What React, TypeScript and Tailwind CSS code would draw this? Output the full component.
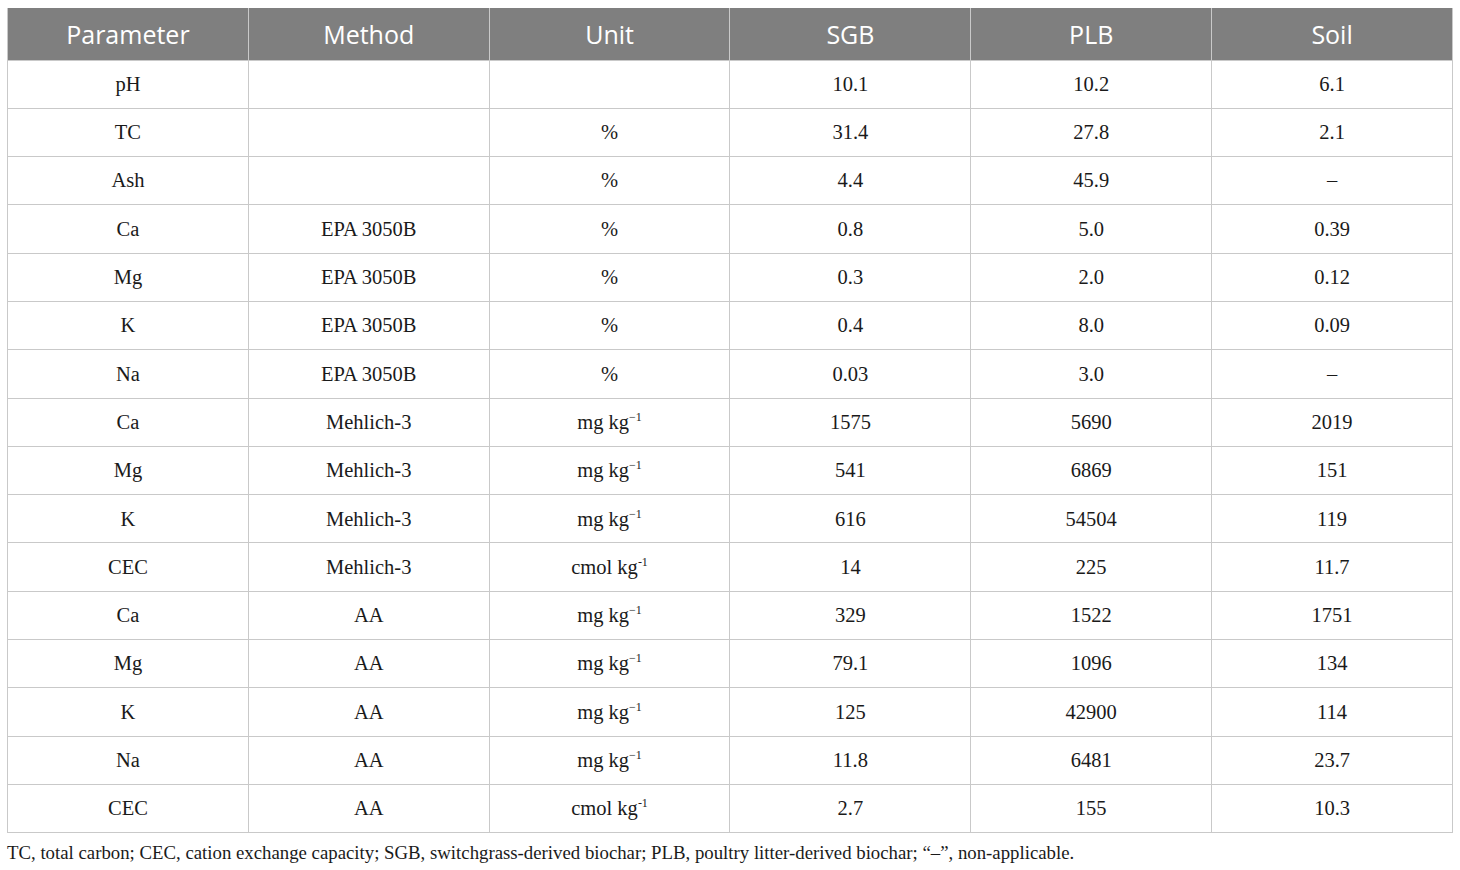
import React from "react";

const mg = (
  <>
    mg kg<sup className="text-[12px] relative top-[-8px] align-baseline">−1</sup>
  </>
);
const cmol = (
  <>
    cmol kg<sup className="text-[12px] relative top-[-8px] align-baseline">-1</sup>
  </>
);

const data: [string, string, React.ReactNode, string, string, string][] = [
  ["pH", "", "", "10.1", "10.2", "6.1"],
  ["TC", "", "%", "31.4", "27.8", "2.1"],
  ["Ash", "", "%", "4.4", "45.9", "–"],
  ["Ca", "EPA 3050B", "%", "0.8", "5.0", "0.39"],
  ["Mg", "EPA 3050B", "%", "0.3", "2.0", "0.12"],
  ["K", "EPA 3050B", "%", "0.4", "8.0", "0.09"],
  ["Na", "EPA 3050B", "%", "0.03", "3.0", "–"],
  ["Ca", "Mehlich-3", mg, "1575", "5690", "2019"],
  ["Mg", "Mehlich-3", mg, "541", "6869", "151"],
  ["K", "Mehlich-3", mg, "616", "54504", "119"],
  ["CEC", "Mehlich-3", cmol, "14", "225", "11.7"],
  ["Ca", "AA", mg, "329", "1522", "1751"],
  ["Mg", "AA", mg, "79.1", "1096", "134"],
  ["K", "AA", mg, "125", "42900", "114"],
  ["Na", "AA", mg, "11.8", "6481", "23.7"],
  ["CEC", "AA", cmol, "2.7", "155", "10.3"],
];

const headers = ["Parameter", "Method", "Unit", "SGB", "PLB", "Soil"];

export default function App() {
  return (
    <div className="w-[1460px] h-[870px] bg-white pt-[8px] px-[7px]">
      <table className="w-[1446px] border-collapse table-fixed">
        <thead>
          <tr className="h-[52px] bg-[#7f7f7f]">
            {headers.map((h, i) => (
              <th
                key={i}
                className="border-x border-[#c9c9c9] text-white font-normal text-[25px] text-center align-middle pt-[1px] font-['Open_Sans',sans-serif]"
              >
                {h}
              </th>
            ))}
          </tr>
        </thead>
        <tbody>
          {data.map((r, i) => (
            <tr key={i} className="h-[48.3px]">
              {r.map((c, j) => (
                <td
                  key={j}
                  className="border border-[#c9c9c9] text-center align-middle text-[20.5px] text-[#1a1a1a] font-['Liberation_Serif',serif] leading-none"
                >
                  {c}
                </td>
              ))}
            </tr>
          ))}
        </tbody>
      </table>
      <p className="mt-[11px] text-[18.8px] text-[#1a1a1a] font-['Liberation_Serif',serif] leading-none">
        TC, total carbon; CEC, cation exchange capacity; SGB, switchgrass-derived biochar; PLB, poultry litter-derived biochar; “–”, non-applicable.
      </p>
    </div>
  );
}
